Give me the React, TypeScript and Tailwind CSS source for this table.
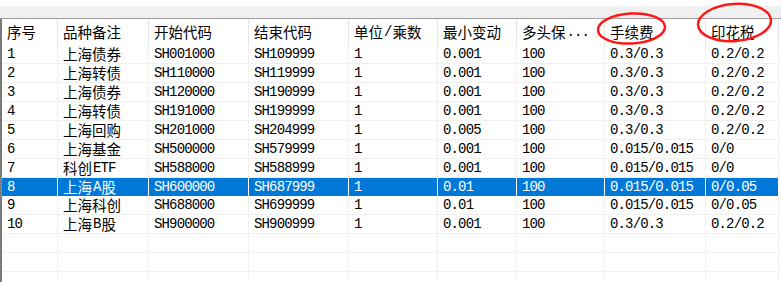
import React from "react";

const cols = [56, 91, 100, 100, 89, 79, 88, 101, 73];
const headers = ["序号", "品种备注", "开始代码", "结束代码", "单位/乘数", "最小变动", "多头保...", "手续费", "印花税"];
const rows: string[][] = [
  ["1", "上海债券", "SH001000", "SH109999", "1", "0.001", "100", "0.3/0.3", "0.2/0.2"],
  ["2", "上海转债", "SH110000", "SH119999", "1", "0.001", "100", "0.3/0.3", "0.2/0.2"],
  ["3", "上海债券", "SH120000", "SH190999", "1", "0.001", "100", "0.3/0.3", "0.2/0.2"],
  ["4", "上海转债", "SH191000", "SH199999", "1", "0.001", "100", "0.3/0.3", "0.2/0.2"],
  ["5", "上海回购", "SH201000", "SH204999", "1", "0.005", "100", "0.3/0.3", "0.2/0.2"],
  ["6", "上海基金", "SH500000", "SH579999", "1", "0.001", "100", "0.015/0.015", "0/0"],
  ["7", "科创ETF", "SH588000", "SH588999", "1", "0.001", "100", "0.015/0.015", "0/0"],
  ["8", "上海A股", "SH600000", "SH687999", "1", "0.01", "100", "0.015/0.015", "0/0.05"],
  ["9", "上海科创", "SH688000", "SH699999", "1", "0.01", "100", "0.015/0.015", "0/0.05"],
  ["10", "上海B股", "SH900000", "SH900999", "1", "0.001", "100", "0.3/0.3", "0.2/0.2"],
  ["", "", "", "", "", "", "", "", ""],
  ["", "", "", "", "", "", "", "", ""],
  ["", "", "", "", "", "", "", "", ""],
];

function Txt({ s }: { s: string }) {
  const parts = s.match(/[\x00-\x7f]+|[^\x00-\x7f]+/g) || [];
  return (
    <span className="leading-[18px] whitespace-nowrap flex items-center">
      {parts.map((p, i) =>
        /^[\x00-\x7f]+$/.test(p) ? (
          <span
            key={i}
            className={
              i > 0
                ? "ml-[1px] font-['Liberation_Mono',monospace] text-[14px] leading-[18px] tracking-[-0.85px]"
                : "font-['Liberation_Mono',monospace] text-[14px] leading-[18px] tracking-[-0.85px]"
            }
          >
            {p}
          </span>
        ) : (
          <span
            key={i}
            className={
              i > 0
                ? "ml-[1px] font-['Noto_Sans_CJK_SC',sans-serif] text-[14.5px] leading-[18px]"
                : "font-['Noto_Sans_CJK_SC',sans-serif] text-[14.5px] leading-[18px]"
            }
          >
            {p}
          </span>
        )
      )}
    </span>
  );
}

export default function App() {
  return (
    <div className="relative h-[282px] w-[781px] overflow-hidden bg-white text-black">
      <div className="h-[6px] bg-white" />
      <div className="h-[13px] bg-[#f0f0f0] border-b border-[#a0a0a0]" />
      <div className="border-l-2 border-[#7a7a7a] w-[779px]">
        <div className="flex h-[26px] bg-white">
          {headers.map((h, i) => (
            <div
              key={i}
              style={{ width: cols[i] }}
              className="shrink-0 border-r border-[#e5e5e5] pl-[5px] flex items-center whitespace-nowrap"
            >
              <Txt s={h} />
            </div>
          ))}
        </div>
        {rows.map((r, ri) => {
          const sel = ri === 7;
          return (
            <div
              key={ri}
              className={
                sel
                  ? "flex h-[19px] bg-[#0078d7] text-white border-t border-l border-dotted border-[#f3b56b] -mt-px -ml-px"
                  : "flex h-[19px] bg-white"
              }
            >
              {r.map((c, ci) => (
                <div
                  key={ci}
                  style={{ width: cols[ci] }}
                  className={
                    sel
                      ? "shrink-0 border-r border-white pl-[5px] flex items-center whitespace-nowrap"
                      : "shrink-0 border-r border-b border-[#f0f0f0] pl-[5px] flex items-center whitespace-nowrap"
                  }
                >
                  <Txt s={c} />
                </div>
              ))}
            </div>
          );
        })}
      </div>
      <svg className="absolute left-0 top-0 pointer-events-none" width="781" height="60">
        <ellipse cx="631.5" cy="28.5" rx="33.5" ry="15" fill="none" stroke="#ff1616" strokeWidth="2.5" transform="rotate(-3 631.5 28.5)" />
        <ellipse cx="734.5" cy="22.5" rx="36.5" ry="18.5" fill="none" stroke="#ff1616" strokeWidth="2.5" transform="rotate(-4 734.5 22.5)" />
      </svg>
    </div>
  );
}
